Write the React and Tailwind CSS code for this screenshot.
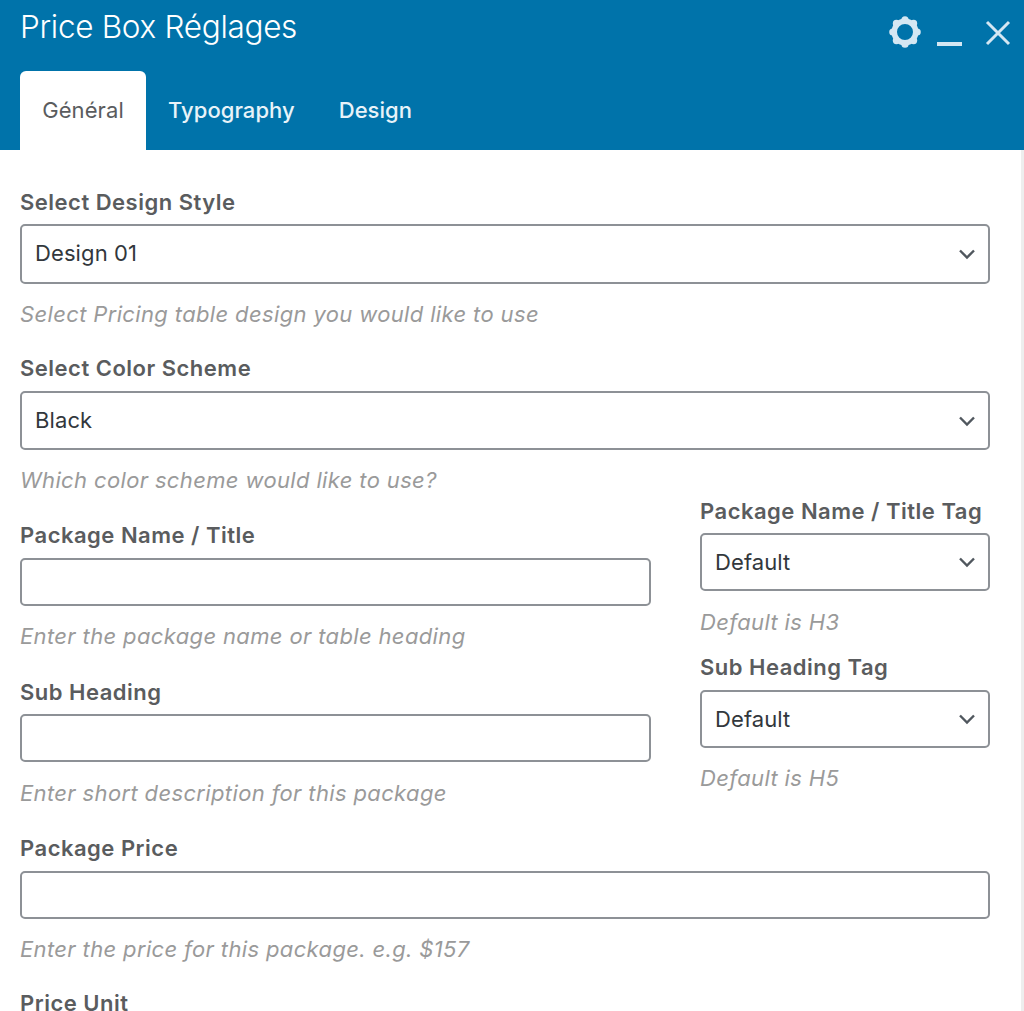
import { useState } from "react";

const FONT = "font-['Inter','Liberation_Sans',sans-serif]";

function Chevron() {
  return (
    <svg
      className="pointer-events-none absolute right-[14px] top-1/2 -translate-y-1/2"
      width="18"
      height="12"
      viewBox="0 0 18 12"
      fill="none"
      stroke="#50575e"
      strokeWidth="2.4"
    >
      <path d="M2 2.5 9 9.5 16 2.5" />
    </svg>
  );
}

function Field({ label, help, className = "", labelGap = "mb-[8px]", helpGap = "mt-[15px]", children }) {
  return (
    <div className={className}>
      <label className={`block text-[22px] leading-[30px] font-semibold tracking-[0.5px] text-[#5a5c5e] whitespace-nowrap ${labelGap}`}>{label}</label>
      {children}
      <p className={`text-[22px] leading-[30px] italic tracking-[0.36px] text-[#9a9a9a] whitespace-nowrap ${helpGap}`}>{help}</p>
    </div>
  );
}

function SelectBox({ value, height = "h-[58px]" }) {
  return (
    <div className="relative">
      <select
        defaultValue={value}
        className={`${height} w-full appearance-none rounded-[5px] border-2 border-[#8d9196] bg-white pl-[13px] pr-10 text-[22px] tracking-[0.1px] text-[#32373c] outline-none ${FONT}`}
      >
        <option>{value}</option>
      </select>
      <Chevron />
    </div>
  );
}

function TextBox() {
  return <input type="text" className="block h-[48px] w-full rounded-[5px] border-2 border-[#8d9196] bg-white px-3 outline-none" />;
}

function Gear() {
  return (
    <svg className="mt-[15px]" width="34" height="34" viewBox="0 0 34 34" fill="#d4e7f3">
      <circle cx="17" cy="17" r="10.75" fill="none" stroke="#d4e7f3" strokeWidth="5.5" />
      <circle cx="17" cy="4.8" r="3.6" />
      <circle cx="17" cy="29.2" r="3.6" />
      <circle cx="4.8" cy="17" r="3.6" />
      <circle cx="29.2" cy="17" r="3.6" />
      <circle cx="8.4" cy="8.4" r="3.6" />
      <circle cx="25.6" cy="8.4" r="3.6" />
      <circle cx="8.4" cy="25.6" r="3.6" />
      <circle cx="25.6" cy="25.6" r="3.6" />
    </svg>
  );
}

export default function App() {
  const [tab, setTab] = useState("Général");
  const tabs = ["Général", "Typography", "Design"];

  return (
    <div className={`h-screen overflow-hidden bg-white ${FONT}`}>
      <header className="h-[150px] bg-[#0073aa] flex flex-col justify-between pl-5 pr-[13px]">
        <div className="flex items-start justify-between">
          <h1 className="text-[31.5px] leading-[36px] tracking-[-0.3px] mt-[9px] font-light text-white">Price Box Réglages</h1>
          <div className="flex items-start">
            <Gear />
            <span className="ml-[15px] mt-[42px] block h-1 w-[25px] bg-[#d4e7f3]" />
            <svg className="ml-[23px] mt-[20px]" width="26" height="26" viewBox="0 0 26 26" stroke="#d4e7f3" strokeWidth="3">
              <path d="M2 2 24 24M24 2 2 24" />
            </svg>
          </div>
        </div>
        <nav className="flex">
          {tabs.map((t) => (
            <button
              key={t}
              onClick={() => setTab(t)}
              className={
                t === tab
                  ? "h-[79px] w-[126px] rounded-t-[6px] bg-white text-[22px] tracking-[0.1px] text-[#5a5c5e]"
                  : "h-[79px] px-[22px] text-[22px] tracking-[0.05px] font-medium text-[#e8f3f9]"
              }
            >
              {t}
            </button>
          ))}
        </nav>
      </header>

      <main className="border-r-[3px] border-[#eeeeee] h-full pt-[37px] pl-5 pr-[31px]">
        <Field label="Select Design Style" help="Select Pricing table design you would like to use" labelGap="mb-[7px]" className="mb-[24px]">
          <SelectBox value="Design 01" height="h-[60px] pb-[2px]" />
        </Field>
        <Field label="Select Color Scheme" help="Which color scheme would like to use?">
          <SelectBox value="Black" height="h-[59px]" />
        </Field>

        <div className="flex justify-between mt-px">
          <div className="w-[631px] pt-[24px]">
            <Field label="Package Name / Title" help="Enter the package name or table heading" className="mb-[26px]">
              <TextBox />
            </Field>
            <Field label="Sub Heading" help="Enter short description for this package" labelGap="mb-[7px]" helpGap="mt-[16px]" className="mb-[25px]">
              <TextBox />
            </Field>
          </div>
          <div className="w-[290px]">
            <Field label="Package Name / Title Tag" help="Default is H3" labelGap="mb-[7px]" helpGap="mt-[16px]" className="mb-[15px]">
              <SelectBox value="Default" />
            </Field>
            <Field label="Sub Heading Tag" help="Default is H5">
              <SelectBox value="Default" />
            </Field>
          </div>
        </div>

        <Field label="Package Price" help="Enter the price for this package. e.g. $157" className="mb-[24px]">
          <TextBox />
        </Field>
        <label className="block text-[22px] leading-[30px] font-semibold tracking-[0.5px] text-[#5a5c5e]">Price Unit</label>
      </main>
    </div>
  );
}
